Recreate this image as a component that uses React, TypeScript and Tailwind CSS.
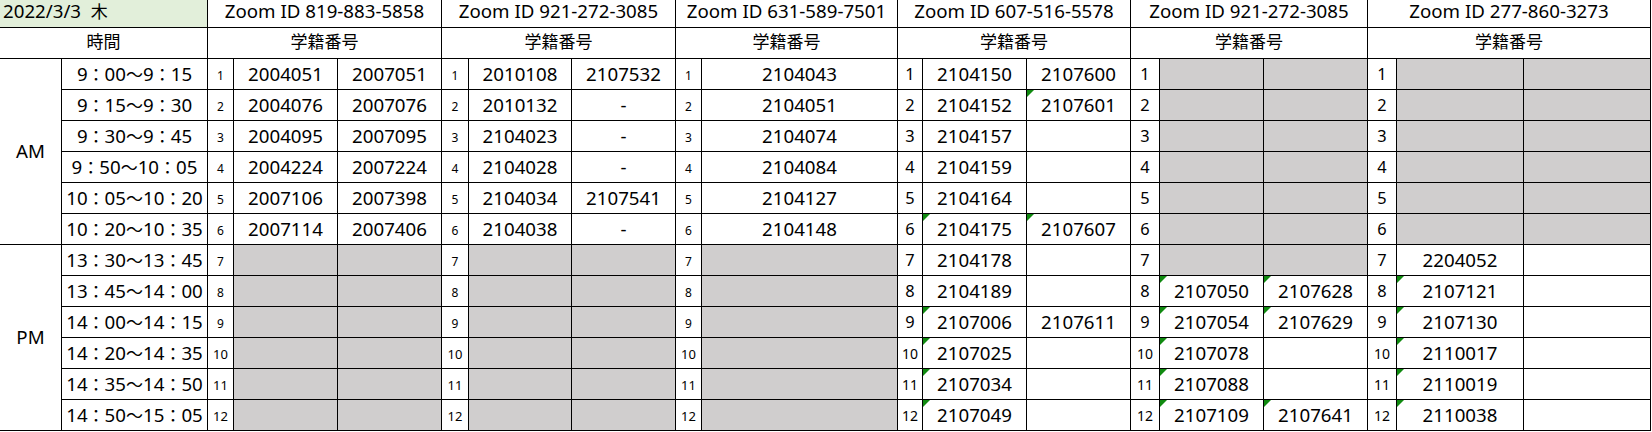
import { Fragment } from "react";

type Row = string[];

interface Group {
  id: string;
  merged?: boolean;
  big?: boolean;
  rows: Row[];
}

// "#" = gray (unused) slot, "*" prefix = Excel green error marker
const gray = (n: number, cols: number): Row[] =>
  Array.from({ length: n }, () => Array(cols).fill("#"));

const times = [
  "9：00～9：15",
  "9：15～9：30",
  "9：30～9：45",
  "9：50～10：05",
  "10：05～10：20",
  "10：20～10：35",
  "13：30～13：45",
  "13：45～14：00",
  "14：00～14：15",
  "14：20～14：35",
  "14：35～14：50",
  "14：50～15：05",
];

const groups: Group[] = [
  {
    id: "Zoom ID 819-883-5858",
    rows: [
      ["2004051", "2007051"],
      ["2004076", "2007076"],
      ["2004095", "2007095"],
      ["2004224", "2007224"],
      ["2007106", "2007398"],
      ["2007114", "2007406"],
      ...gray(6, 2),
    ],
  },
  {
    id: "Zoom ID 921-272-3085",
    rows: [
      ["2010108", "2107532"],
      ["2010132", "-"],
      ["2104023", "-"],
      ["2104028", "-"],
      ["2104034", "2107541"],
      ["2104038", "-"],
      ...gray(6, 2),
    ],
  },
  {
    id: "Zoom ID 631-589-7501",
    merged: true,
    rows: [
      ["2104043"],
      ["2104051"],
      ["2104074"],
      ["2104084"],
      ["2104127"],
      ["2104148"],
      ...gray(6, 1),
    ],
  },
  {
    id: "Zoom ID 607-516-5578",
    big: true,
    rows: [
      ["2104150", "2107600"],
      ["2104152", "*2107601"],
      ["2104157", ""],
      ["2104159", ""],
      ["2104164", ""],
      ["*2104175", "*2107607"],
      ["2104178", ""],
      ["2104189", ""],
      ["*2107006", "2107611"],
      ["*2107025", ""],
      ["*2107034", ""],
      ["*2107049", ""],
    ],
  },
  {
    id: "Zoom ID 921-272-3085",
    big: true,
    rows: [
      ...gray(7, 2),
      ["*2107050", "*2107628"],
      ["*2107054", "*2107629"],
      ["*2107078", ""],
      ["*2107088", ""],
      ["*2107109", "*2107641"],
    ],
  },
  {
    id: "Zoom ID 277-860-3273",
    big: true,
    rows: [
      ...gray(6, 2),
      ["2204052", ""],
      ["*2107121", ""],
      ["*2107130", ""],
      ["*2110017", ""],
      ["*2110019", ""],
      ["*2110038", ""],
    ],
  },
];

const Tri = () => (
  <svg className="absolute left-0 top-0" width="7" height="7" viewBox="0 0 7 7">
    <polygon points="0,0 7,0 0,7" fill="#108a10" />
  </svg>
);

// fullwidth colon / tilde come from the CJK font at a smaller size
const Time = ({ t }: { t: string }) => (
  <>
    {t.split(/([：～])/).map((p, i) =>
      p === "：" || p === "～" ? (
        <span key={i} className="text-[17px]">
          {p}
        </span>
      ) : (
        <Fragment key={i}>{p}</Fragment>
      )
    )}
  </>
);

const DataCell = ({ v }: { v: string }) => {
  if (v === "#") return <div className="bg-[#d0cece]" />;
  const tri = v.startsWith("*");
  return (
    <div className="relative bg-white text-center text-[18.7px] leading-[29px]">
      {tri && <Tri />}
      {tri ? v.slice(1) : v}
    </div>
  );
};

const NumCell = ({ n, big }: { n: number; big?: boolean }) => {
  let size = "text-[12px] leading-[34px]";
  if (big) size = n < 10 ? "text-[16.4px] leading-[30px]" : "text-[14px] leading-[32px]";
  else if (n >= 10) size = "text-[13px] leading-[33px]";
  return <div className={`bg-white text-center ${size}`}>{n}</div>;
};

const App = () => {
  return (
    <div className="min-h-screen bg-white font-['Noto_Sans','Noto_Sans_CJK_JP',sans-serif] text-black">
      <div className="grid w-max grid-cols-[61px_145px_25px_103px_103px_26px_102px_103px_25px_195px_24px_103px_103px_28px_103px_103px_28px_126px_126px] grid-rows-[27px_repeat(13,30px)] gap-px bg-black pr-px pb-px">
        {/* header rows */}
        <div className="col-span-2 whitespace-pre bg-[#e2efda] pl-[3px] text-[18.7px] leading-[22px]">
          2022/3/3  <span className="text-[17px]">木</span>
        </div>
        {groups.map((g, i) => (
          <div
            key={i}
            className={`${g.merged ? "col-span-2" : "col-span-3"} bg-white text-center text-[18.7px] leading-[22px]`}
          >
            {g.id}
          </div>
        ))}
        <div className="col-span-2 bg-white text-center text-[17px] leading-[28px]">時間</div>
        {groups.map((g, i) => (
          <div
            key={i}
            className={`${g.merged ? "col-span-2" : "col-span-3"} bg-white text-center text-[17px] leading-[28px]`}
          >
            学籍番号
          </div>
        ))}

        {/* body */}
        {times.map((t, r) => (
          <Fragment key={r}>
            {r === 0 && (
              <div className="row-span-6 flex items-center justify-center bg-white text-[18.7px]">AM</div>
            )}
            {r === 6 && (
              <div className="row-span-6 flex items-center justify-center bg-white text-[18.7px]">PM</div>
            )}
            <div className="bg-white text-center text-[18.7px] leading-[29px]">
              <Time t={t} />
            </div>
            {groups.map((g, gi) => (
              <Fragment key={gi}>
                <NumCell n={r + 1} big={g.big} />
                {g.rows[r].map((v, ci) => (
                  <DataCell key={ci} v={v} />
                ))}
              </Fragment>
            ))}
          </Fragment>
        ))}
      </div>
    </div>
  );
};

export default App;
